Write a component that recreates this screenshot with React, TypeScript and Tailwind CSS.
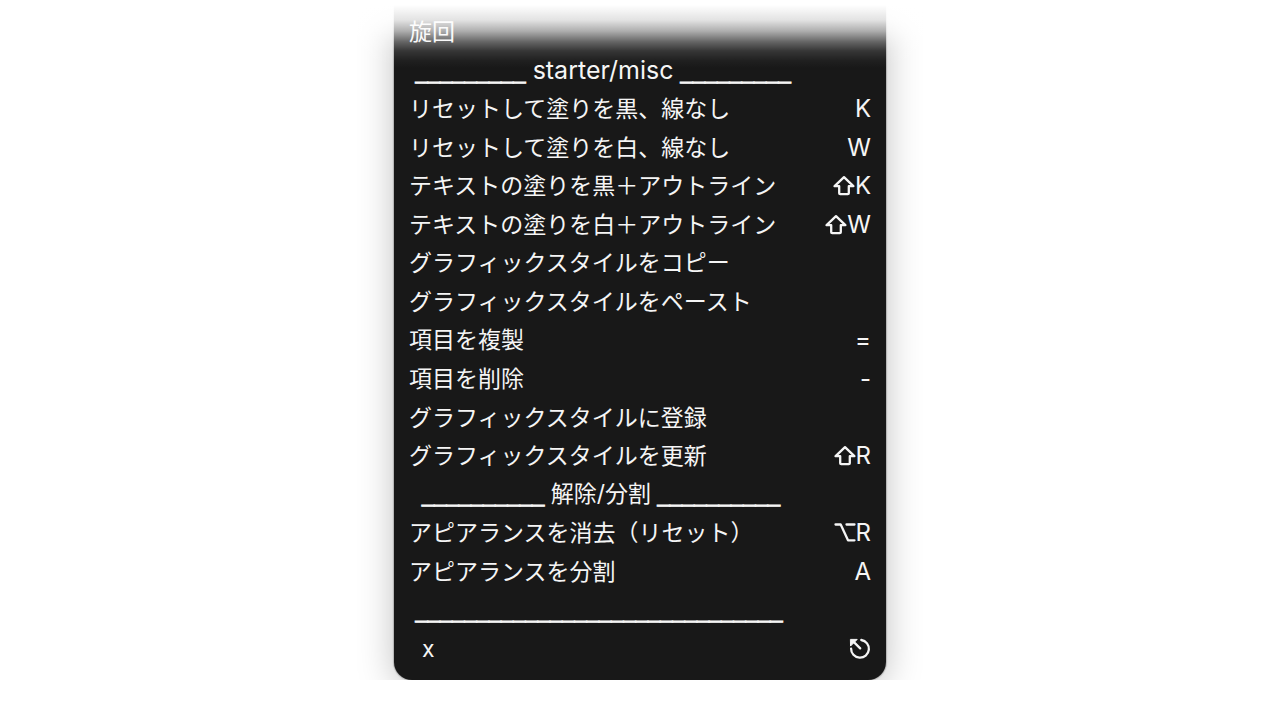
import type { ReactNode } from "react";

type Modifier = "shift" | "option" | "escape";

interface Command {
  label: string;
  modifier?: Modifier;
  shortcut?: string;
}

interface Heading {
  indent: string;
  rule: string;
  title?: ReactNode;
}

const commands: (Command | Heading)[] = [
  { label: "旋回" },
  {
    indent: " ",
    rule: "_________",
    title: <span className="text-[25px]"> starter/misc </span>,
  },
  { label: "リセットして塗りを黒、線なし", shortcut: "K" },
  { label: "リセットして塗りを白、線なし", shortcut: "W" },
  { label: "テキストの塗りを黒＋アウトライン", modifier: "shift", shortcut: "K" },
  { label: "テキストの塗りを白＋アウトライン", modifier: "shift", shortcut: "W" },
  { label: "グラフィックスタイルをコピー" },
  { label: "グラフィックスタイルをペースト" },
  { label: "項目を複製", shortcut: "=" },
  { label: "項目を削除", shortcut: "-" },
  { label: "グラフィックスタイルに登録" },
  { label: "グラフィックスタイルを更新", modifier: "shift", shortcut: "R" },
  { indent: "  ", rule: "__________", title: " 解除/分割 " },
  { label: "アピアランスを消去（リセット）", modifier: "option", shortcut: "R" },
  { label: "アピアランスを分割", shortcut: "A" },
  { indent: " ", rule: "______________________________" },
  { label: "  x", modifier: "escape" },
];

const modifierPaths: Record<Modifier, ReactNode> = {
  shift: <path d="M11 2.2 1.6 11.2h4.6v7q0 1 1 1h7.6q1 0 1-1v-7h4.6Z" />,
  option: <path d="M1.5 2.5h5.2l7.3 15.8h6.5M12.5 2.5h8" />,
  escape: (
    <>
      <path d="M12.3 2a8.9 8.9 0 1 1-10.2 8.6" />
      <path d="M11.2 10.4 4.4 3.6" />
      <path d="M1.8 1.4h6.4L1.8 7.8Z" fill="currentColor" strokeWidth="1" />
    </>
  ),
};

function ModifierIcon({ name }: { name: Modifier }) {
  return (
    <svg
      className="h-[22px] w-[22px]"
      viewBox="0 0 22 22"
      fill="none"
      stroke="currentColor"
      strokeWidth="2.3"
      strokeLinejoin="round"
      strokeLinecap="round"
      role="img"
      aria-label={name}
    >
      {modifierPaths[name]}
    </svg>
  );
}

function Rule({ children }: { children: string }) {
  return (
    <span className="font-['Liberation_Sans',sans-serif] text-[22px] [-webkit-text-stroke:1px_#f5f5f5]">
      {children}
    </span>
  );
}

function HeadingRow({ indent, rule, title }: Heading) {
  return (
    <li className="flex items-center whitespace-pre px-[15px]">
      <span>
        {indent}
        <Rule>{rule}</Rule>
        {title}
        {title && <Rule>{rule}</Rule>}
      </span>
    </li>
  );
}

function CommandRow({ label, modifier, shortcut }: Command) {
  return (
    <li className="flex">
      <button type="button" className="flex w-full items-center justify-between whitespace-pre px-[15px] text-left">
        <span>{label}</span>
        <span className="flex items-center text-2xl leading-9">
          {modifier && <ModifierIcon name={modifier} />}
          {shortcut}
        </span>
      </button>
    </li>
  );
}

export default function App() {
  return (
    <main className="bg-white">
      <div className="relative mx-auto w-full max-w-[566px] overflow-hidden px-[37px]">
        <ul className="grid min-h-[680px] auto-rows-fr rounded-b-[18px] bg-[#181818] pt-[13px] pb-3 font-[Inter,'Noto_Sans_CJK_JP',sans-serif] text-[23px] leading-9 text-[#f5f5f5] shadow-[0_0_1px_1px_rgba(0,0,0,0.2),0_6px_36px_rgba(0,0,0,0.25)]">
          {commands.map((item, index) =>
            "rule" in item ? <HeadingRow key={index} {...item} /> : <CommandRow key={index} {...item} />
          )}
        </ul>
        {/* Fade over the scrolled-off top of the menu */}
        <div className="pointer-events-none absolute inset-x-0 top-0 h-[68px] bg-[linear-gradient(to_bottom,white_5px,rgba(255,255,255,0.88)_20px,rgba(255,255,255,0.65)_31px,rgba(255,255,255,0.33)_42px,rgba(255,255,255,0.13)_51px,rgba(255,255,255,0.03)_61px,transparent)]" />
      </div>
    </main>
  );
}
